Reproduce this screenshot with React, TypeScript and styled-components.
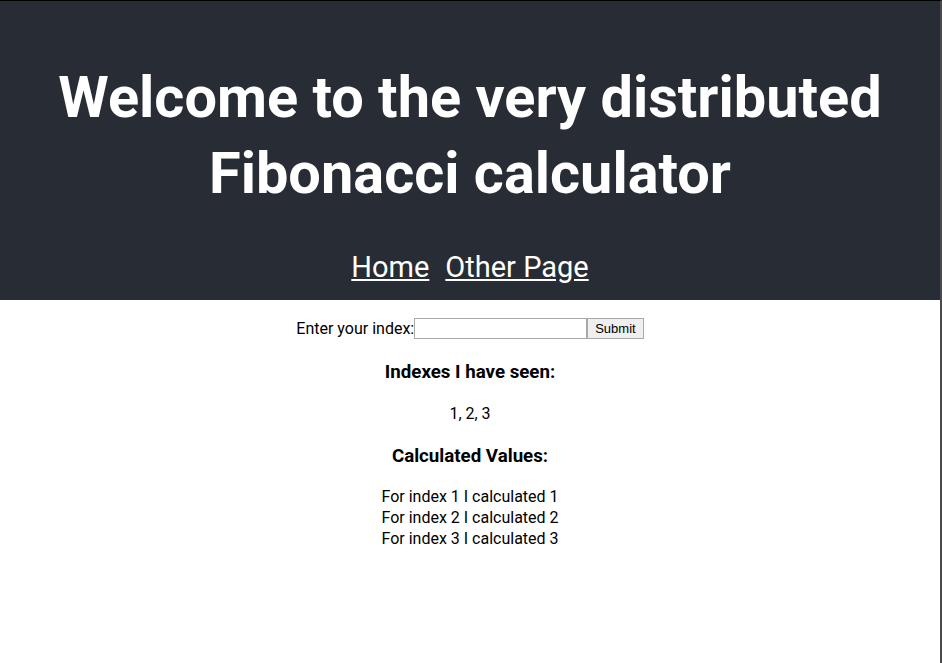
import React from "react";
import styled, { createGlobalStyle } from "styled-components";

const Global = createGlobalStyle`
  html, body { margin: 0; padding: 0; background: #fff; }
  body { font-family: Roboto, "Noto Sans", sans-serif; font-size: 16px; color: #000; }
`;

const Frame = styled.div`
  box-sizing: border-box;
  width: 942px;
  min-height: 663px;
  border-top: 1px solid #000;
  border-right: 2px solid #4a4a4a;
  text-align: center;
`;

const Header = styled.header`
  background: #282c34;
  color: #fff;
  padding: 1px 0 16px;
`;

const Title = styled.h1`
  font-size: 57.7px;
  font-weight: 700;
  margin: 57px 20px 39px;
  line-height: 76px;
`;

const Nav = styled.nav`
  display: flex;
  justify-content: center;
  gap: 16px;
  font-size: 29px;
`;

const NavLink = styled.a`
  color: #fff;
  text-decoration: underline;
`;

const Body = styled.main`
  padding-top: 18px;
`;

const Form = styled.form`
  display: flex;
  justify-content: center;
  align-items: center;
`;

const Label = styled.label``;

const Input = styled.input`
  width: 169px;
  height: 17px;
  border: 1px solid #a9a9a9;
  padding: 1px;
  margin: 0;
`;

const Button = styled.button`
  font-family: "Liberation Sans", Arial, sans-serif;
  font-size: 13px;
  margin: 0;
  padding: 1px 7px;
  border: 1px solid #a9a9a9;
  background: #efefef;
  height: 21px;
`;

const Heading = styled.h3<{ $top?: number }>`
  font-size: 18.72px;
  font-weight: 700;
  line-height: 22px;
  margin: ${(p) => p.$top ?? 22}px 0 20px;
`;

const Values = styled.div`
  margin-top: -1px;
`;

const Line = styled.div`
  line-height: 21px;
`;

export default function App() {
  return (
    <>
      <Global />
      <Frame>
        <Header>
          <Title>
            Welcome to the very distributed
            <br />
            Fibonacci calculator
          </Title>
          <Nav>
            <NavLink href="#">Home</NavLink>
            <NavLink href="#">Other Page</NavLink>
          </Nav>
        </Header>
        <Body>
          <Form onSubmit={(e) => e.preventDefault()}>
            <Label>Enter your index:</Label>
            <Input />
            <Button>Submit</Button>
          </Form>
          <Heading>Indexes I have seen:</Heading>
          <Line>1, 2, 3</Line>
          <Heading $top={21}>Calculated Values:</Heading>
          <Values>
            <Line>For index 1 I calculated 1</Line>
            <Line>For index 2 I calculated 2</Line>
            <Line>For index 3 I calculated 3</Line>
          </Values>
        </Body>
      </Frame>
    </>
  );
}
